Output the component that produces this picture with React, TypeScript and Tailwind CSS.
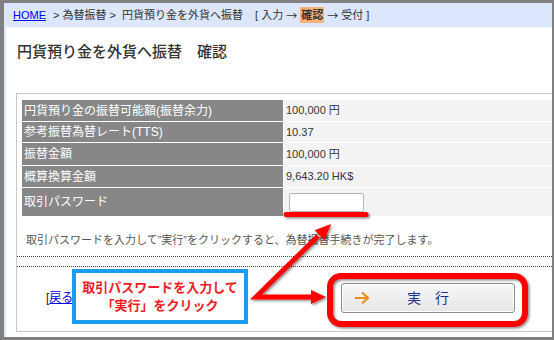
import { ReactNode } from "react";

const jp = { fontFamily: '"Liberation Sans", "Noto Sans CJK JP", sans-serif' };

type Row = { label: string; value: ReactNode };

const rows: Row[] = [
  { label: "円貨預り金の振替可能額(振替余力)", value: "100,000 円" },
  { label: "参考振替為替レート(TTS)", value: "10.37" },
  { label: "振替金額", value: "100,000 円" },
  { label: "概算換算金額", value: "9,643.20 HK$" },
  {
    label: "取引パスワード",
    value: (
      <input
        type="password"
        className="w-[75px] h-[19px] bg-white border border-[#b8b8b8] rounded-[2px] ml-[3px] outline-none"
      />
    ),
  },
];

export default function App() {
  return (
    <div
      className="w-[554px] h-[340px] bg-[#808080] pt-[3px] pl-[4px] pr-[2px] pb-[3px] relative"
      style={jp}
    >
      <div className="h-full bg-white border-l-2 border-[#dce6fc] overflow-hidden flex flex-col">
        {/* Breadcrumb */}
        <div className="h-[24px] shrink-0 bg-[#dce6fc] flex items-center pl-[7px] text-[11px] text-[#333] whitespace-nowrap">
          <a href="#" className="text-[#0000ee] underline">HOME</a>
          <span className="ml-[7px]">&gt; 為替振替 &gt;&nbsp; 円貨預り金を外貨へ振替</span>
          <span className="ml-[12px]">[ 入力 </span>
          <span className="font-['Noto_Sans_CJK_JP'] mx-[3px]">→</span>
          <span className="bg-[#f9b27c] font-bold px-[1px]">確認</span>
          <span className="font-['Noto_Sans_CJK_JP'] mx-[3px]">→</span>
          <span>受付 ]</span>
        </div>

        {/* Title */}
        <h1 className="mt-[15px] ml-[11px] text-[15px] leading-[20px] text-[#333] font-medium whitespace-nowrap">
          円貨預り金を外貨へ振替　確認
        </h1>

        {/* Panel */}
        <div className="mt-[31px] ml-[10px] w-[545px] border border-[#c8c8c0] pt-[6px] pb-[18px] shrink-0">
          <div className="ml-[5px] grid grid-cols-[261px_1fr] grid-rows-[21px_20px_22px_21px_28px] gap-[1px] bg-white">
            {rows.map((r) => (
              <div key={r.label} className="contents">
                <div className="bg-[#878787] text-white text-[12px] flex items-center pl-[2px] whitespace-nowrap">
                  {r.label}
                </div>
                <div className="bg-[#f3f3f3] text-[#333] text-[11px] flex items-center pl-[2px] whitespace-nowrap">
                  {r.value}
                </div>
              </div>
            ))}
          </div>

          <p className="mt-[16px] ml-[9px] text-[11px] leading-[16px] text-[#555] whitespace-nowrap">
            取引パスワードを入力して”実行”をクリックすると、為替振替手続きが完了します。
          </p>

          <div className="mt-[8px] border-t border-dotted border-[#444]" />
          <div className="mt-[9px] border-t border-dotted border-[#444]" />

          <div className="mt-[16px] grid grid-cols-[324px_174px] items-center">
            <div className="pl-[29px] text-[12px] text-[#222]">
              [<a href="#" className="text-[#0000ee] underline">戻る</a>]
            </div>
            <button className="h-[30px] rounded-[3px] border border-[#8a8a8a] bg-gradient-to-b from-[#f7f7f7] to-[#e6e6e6] shadow-[inset_0_0_0_1px_#ffffff] flex items-center pl-[12px]">
              <svg width="16" height="14" viewBox="0 0 16 14">
                <path d="M1 7H14M8 1.5L14 7L8 12.5" fill="none" stroke="#f08c1e" strokeWidth="2.2" />
              </svg>
              <span className="flex-1 text-center pr-[28px] text-[14px] text-[#23318a]">実　行</span>
            </button>
          </div>
        </div>
      </div>

      {/* Annotation overlay */}
      <svg
        className="absolute inset-0 pointer-events-none"
        width="554"
        height="340"
        viewBox="0 0 554 340"
      >
        <defs>
          <filter id="sh" x="-20%" y="-20%" width="140%" height="140%">
            <feDropShadow dx="1.5" dy="1.5" stdDeviation="1" floodColor="#000" floodOpacity="0.45" />
          </filter>
        </defs>
        <g filter="url(#sh)">
          <line x1="286" y1="214.5" x2="366" y2="214.5" stroke="#ff0000" strokeWidth="5" strokeLinecap="round" />
          <polyline
            points="318,236 256,297 312,297"
            fill="none"
            stroke="#ff0000"
            strokeWidth="5"
            strokeLinejoin="miter"
          />
          <polygon points="331,224 324.4,240.2 314.6,230.2" fill="#ff0000" />
          <polygon points="326,297 311,290 311,304" fill="#ff0000" />
          <rect x="330" y="276" width="195" height="48" rx="11" fill="none" stroke="#ff0000" strokeWidth="6" />
        </g>
      </svg>

      <div className="absolute left-[72px] top-[269px] w-[176px] h-[55px] border-[4px] border-[#1a9cf0] bg-white flex flex-col items-center justify-center text-[13px] leading-[18px] font-bold text-[#ee1c25] whitespace-nowrap">
        <span>取引パスワードを入力して</span>
        <span>「実行」をクリック</span>
      </div>
    </div>
  );
}
